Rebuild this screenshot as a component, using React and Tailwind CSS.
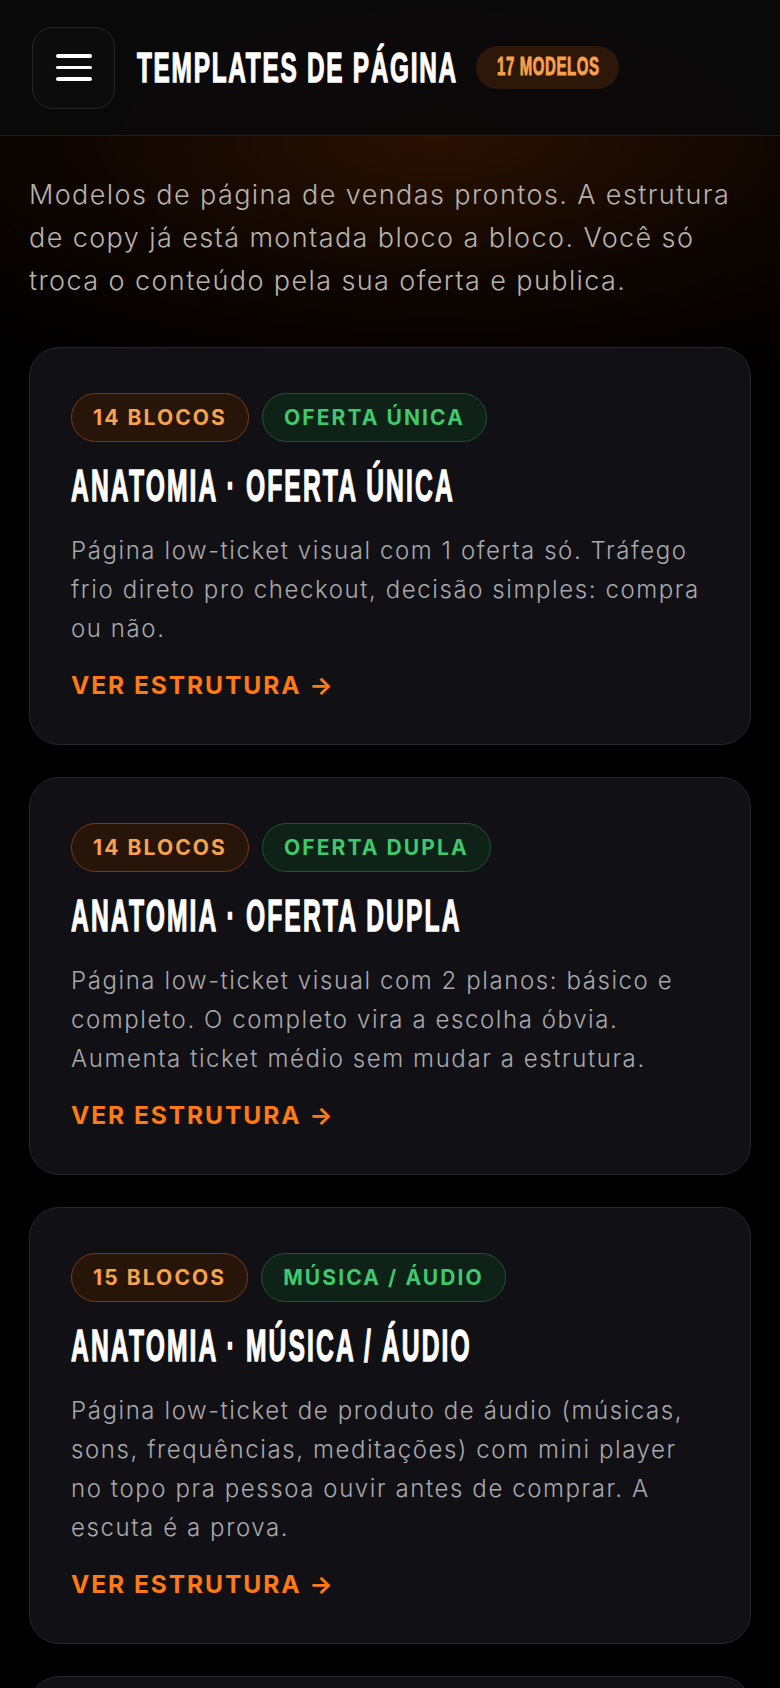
import React from "react";

const body = "font-['Inter','Noto_Sans',sans-serif]";
const cond = "font-['Liberation_Sans','Arial',sans-serif] font-bold";

function Pill({ tone, children }) {
  const cls =
    tone === "orange"
      ? "border-[#7a3b13] bg-[#28150a] text-[#f7a24c]"
      : "border-[#1e5631] bg-[#0f2217] text-[#3fc86d]";
  return (
    <span
      className={`flex h-[49px] items-center rounded-full border-[1.5px] px-[21px] text-[21px] font-bold tracking-[0.1em] ${cls}`}
    >
      {children}
    </span>
  );
}

function Card({ blocks, tag, title, titleW, lines }) {
  return (
    <div className="rounded-[30px] border-[1.5px] border-[#26262b] bg-[#111115] px-[41px] pt-[45px] pb-[47px]">
      <div className="flex gap-[13px]">
        <Pill tone="orange">{blocks}</Pill>
        <Pill tone="green">{tag}</Pill>
      </div>
      <div className="mt-[22px] h-[44px]">
        <span className={`inline-block ${titleW}`}>
          <span
            className={`inline-block origin-left scale-x-[0.56] whitespace-nowrap text-[44px] leading-[44px] tracking-[3.8px] text-white [-webkit-text-stroke:1.3px_white] ${cond}`}
          >
            {title}
          </span>
        </span>
      </div>
      <p className="mt-[23px] text-[24px] font-light leading-[39px] tracking-[0.066em] text-[#a9a9ad]">
        {lines.map((l, i) => (
          <React.Fragment key={i}>
            {l}
            {i < lines.length - 1 && <br />}
          </React.Fragment>
        ))}
      </p>
      <div className="mt-[25px] text-[24.5px] font-bold leading-[24px] tracking-[0.08em] text-[#ff7a12]">
        VER ESTRUTURA →
      </div>
    </div>
  );
}

export default function App() {
  return (
    <div
      className={`min-h-[1688px] w-full bg-black bg-[radial-gradient(ellipse_90%_280px_at_56%_136px,rgba(190,80,15,0.22),rgba(120,45,8,0.11)_55%,transparent_100%)] ${body}`}
    >
      <header className="flex h-[136px] items-center border-b-[1.5px] border-[#1e1e1e] bg-[#0b0a09]/95 px-[32px]">
        <button className="flex h-[82px] w-[83px] flex-col items-center justify-center gap-[8px] rounded-[20px] border-[1.5px] border-[#262626] bg-[#0c0c0c]">
          <span className="h-[3.5px] w-[36px] rounded-full bg-white" />
          <span className="h-[3.5px] w-[36px] rounded-full bg-white" />
          <span className="h-[3.5px] w-[36px] rounded-full bg-white" />
        </button>
        <h1 className="ml-[22px] h-[42px]">
          <span className="inline-block w-[316px]">
            <span
              className={`inline-block origin-left scale-x-[0.58] whitespace-nowrap text-[42px] leading-[42px] tracking-[3px] text-white [-webkit-text-stroke:1.3px_white] ${cond}`}
            >
              TEMPLATES DE PÁGINA
            </span>
          </span>
        </h1>
        <span className="ml-[23px] flex h-[43px] items-center rounded-full bg-[#2c1709] px-[21px]">
          <span className="inline-block w-[101px]">
            <span
              className={`inline-block origin-left scale-x-[0.6] whitespace-nowrap text-[25px] leading-[25px] tracking-[1px] text-[#f8a14c] [-webkit-text-stroke:0.9px_#f8a14c] ${cond}`}
            >
              17 MODELOS
            </span>
          </span>
        </span>
      </header>

      <p className="px-[29px] pt-[37px] text-[27px] font-light leading-[43px] tracking-[0.052em] text-[#b8b2ac]">
        Modelos de página de vendas prontos. A estrutura
        <br />
        de copy já está montada bloco a bloco. Você só
        <br />
        troca o conteúdo pela sua oferta e publica.
      </p>

      <div className="flex flex-col gap-[32px] px-[29px] pt-[45px] pb-[40px]">
        <Card
          blocks="14 BLOCOS"
          tag="OFERTA ÚNICA"
          title="ANATOMIA · OFERTA ÚNICA"
          titleW="w-[378px]"
          lines={[
            "Página low-ticket visual com 1 oferta só. Tráfego",
            "frio direto pro checkout, decisão simples: compra",
            "ou não.",
          ]}
        />
        <Card
          blocks="14 BLOCOS"
          tag="OFERTA DUPLA"
          title="ANATOMIA · OFERTA DUPLA"
          titleW="w-[384px]"
          lines={[
            "Página low-ticket visual com 2 planos: básico e",
            "completo. O completo vira a escolha óbvia.",
            "Aumenta ticket médio sem mudar a estrutura.",
          ]}
        />
        <Card
          blocks="15 BLOCOS"
          tag="MÚSICA / ÁUDIO"
          title="ANATOMIA · MÚSICA / ÁUDIO"
          titleW="w-[408px]"
          lines={[
            "Página low-ticket de produto de áudio (músicas,",
            "sons, frequências, meditações) com mini player",
            "no topo pra pessoa ouvir antes de comprar. A",
            "escuta é a prova.",
          ]}
        />
        <Card
          blocks="16 BLOCOS"
          tag="VSL"
          title="ANATOMIA · VSL"
          titleW="w-[250px]"
          lines={[
            "Página com vídeo de vendas no topo e a oferta",
            "logo abaixo, pronta pra tráfego frio.",
          ]}
        />
      </div>
    </div>
  );
}
